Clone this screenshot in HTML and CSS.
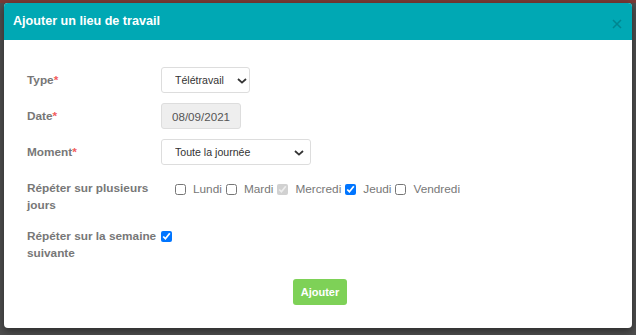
FILE: index.html
```
<!DOCTYPE html>
<html>
    <head>
        <meta charset="UTF-8">
        <title>Ajouter un lieu de travail</title>
        <link rel="stylesheet" href="styles.css">
    </head>
    <body>
        <div class="modal">
            <div class="modal-header">
                <span class="modal-title">Ajouter un lieu de travail</span>
                <svg class="close" width="10" height="10" viewBox="0 0 10 10">
                    <path d="M1 1 L9 9 M9 1 L1 9" />
                </svg>
            </div>
            <div class="modal-body">
                <div class="row">
                    <label class="lbl">Type<span class="req">*</span></label>
                    <div class="field">
                        <select class="sel sel-type"><option>Télétravail</option></select>
                    </div>
                </div>
                <div class="row">
                    <label class="lbl">Date<span class="req">*</span></label>
                    <div class="field">
                        <input class="date" type="text" value="08/09/2021" disabled>
                    </div>
                </div>
                <div class="row">
                    <label class="lbl">Moment<span class="req">*</span></label>
                    <div class="field">
                        <select class="sel sel-moment"><option>Toute la journée</option></select>
                    </div>
                </div>
                <div class="row row-multi">
                    <label class="lbl">Répéter sur plusieurs jours</label>
                    <div class="field days">
                        <label class="day"><input type="checkbox">Lundi</label>
                        <label class="day"><input type="checkbox">Mardi</label>
                        <label class="day"><input type="checkbox" checked disabled>Mercredi</label>
                        <label class="day"><input type="checkbox" checked>Jeudi</label>
                        <label class="day"><input type="checkbox">Vendredi</label>
                    </div>
                </div>
                <div class="row row-multi row-next">
                    <label class="lbl">Répéter sur la semaine suivante</label>
                    <div class="field">
                        <input class="next-week" type="checkbox" checked>
                    </div>
                </div>
                <div class="footer">
                    <button class="btn-add">Ajouter</button>
                </div>
            </div>
        </div>
    </body>
</html>
```
FILE: styles.css
```
html, body{
    margin: 0;
    height: 100%;
}
body{
    background: linear-gradient(#7a3a36 0, #7a3a36 3px, #4e4e4e 3px);
    font-family: "Liberation Sans", Arial, sans-serif;
    padding: 3px 4px 0 4px;
    box-sizing: border-box;
}
.modal{
    width: 628px;
    height: 325px;
    background: #fff;
    border-radius: 4px;
    overflow: hidden;
    box-shadow: 0 3px 8px rgba(0,0,0,.45);
}
.modal-header{
    height: 37px;
    background: #00a8b4;
    display: flex;
    align-items: center;
    justify-content: space-between;
    padding: 0 10px 0 9px;
}
.modal-title{
    color: #fff;
    font-weight: bold;
    font-size: 12.6px;
    margin-top: -2px;
}
.close{
    margin-top: 4px;
}
.close path{
    stroke: rgba(0,0,0,.2);
    stroke-width: 1.6;
    fill: none;
}
.modal-body{
    padding: 27px 23px 0 23px;
}
.row{
    display: flex;
    align-items: center;
    margin-bottom: 10px;
}
.lbl{
    width: 134px;
    flex: none;
    box-sizing: border-box;
    padding-right: 4px;
    color: #777;
    font-weight: bold;
    font-size: 11.8px;
    line-height: 17px;
}
.req{
    color: #f25c5c;
}
.sel{
    -webkit-appearance: none;
    appearance: none;
    height: 26px;
    border: 1px solid #ddd;
    border-radius: 3px;
    background: #fff url("data:image/svg+xml,%3Csvg xmlns='http://www.w3.org/2000/svg' width='10' height='6' viewBox='0 0 10 6'%3E%3Cpath d='M1 1 L5 4.6 L9 1' fill='none' stroke='%23333' stroke-width='1.8'/%3E%3C/svg%3E") no-repeat;
    font-family: "Liberation Sans", Arial, sans-serif;
    font-size: 10.6px;
    color: #333;
    padding: 0 0 0 13px;
    margin: 0;
}
.sel-type{
    width: 89px;
    background-position: 75px 10px;
}
.sel-moment{
    width: 150px;
    background-position: 132px 10px;
}
.date{
    width: 80px;
    height: 26px;
    box-sizing: border-box;
    border: 1px solid #ddd;
    border-radius: 3px;
    background: #eee;
    font-family: "Liberation Sans", Arial, sans-serif;
    font-size: 11.6px;
    color: #555;
    padding: 0 0 0 10px;
    margin: 0;
}
.row-multi{
    align-items: flex-start;
    margin-top: 15px;
    margin-bottom: 14px;
}
.days{
    display: flex;
    align-items: center;
    padding-left: 14px;
    padding-top: 2px;
}
.day{
    display: flex;
    align-items: center;
    font-size: 11.8px;
    color: #777;
    margin-right: 4px;
}
.day input{
    width: 11px;
    height: 11px;
    margin: 0 7px 0 0;
}
.next-week{
    width: 11px;
    height: 11px;
    margin: 2px 0 0 0;
}
.row-next{
    margin-top: 0;
}
.footer{
    display: flex;
    justify-content: center;
    padding: 3px 0 0 4px;
}
.btn-add{
    width: 54px;
    height: 26px;
    border: none;
    border-radius: 3px;
    background: #7ed157;
    color: #fff;
    font-family: "Liberation Sans", Arial, sans-serif;
    font-weight: bold;
    font-size: 11px;
    padding: 0;
}
```
